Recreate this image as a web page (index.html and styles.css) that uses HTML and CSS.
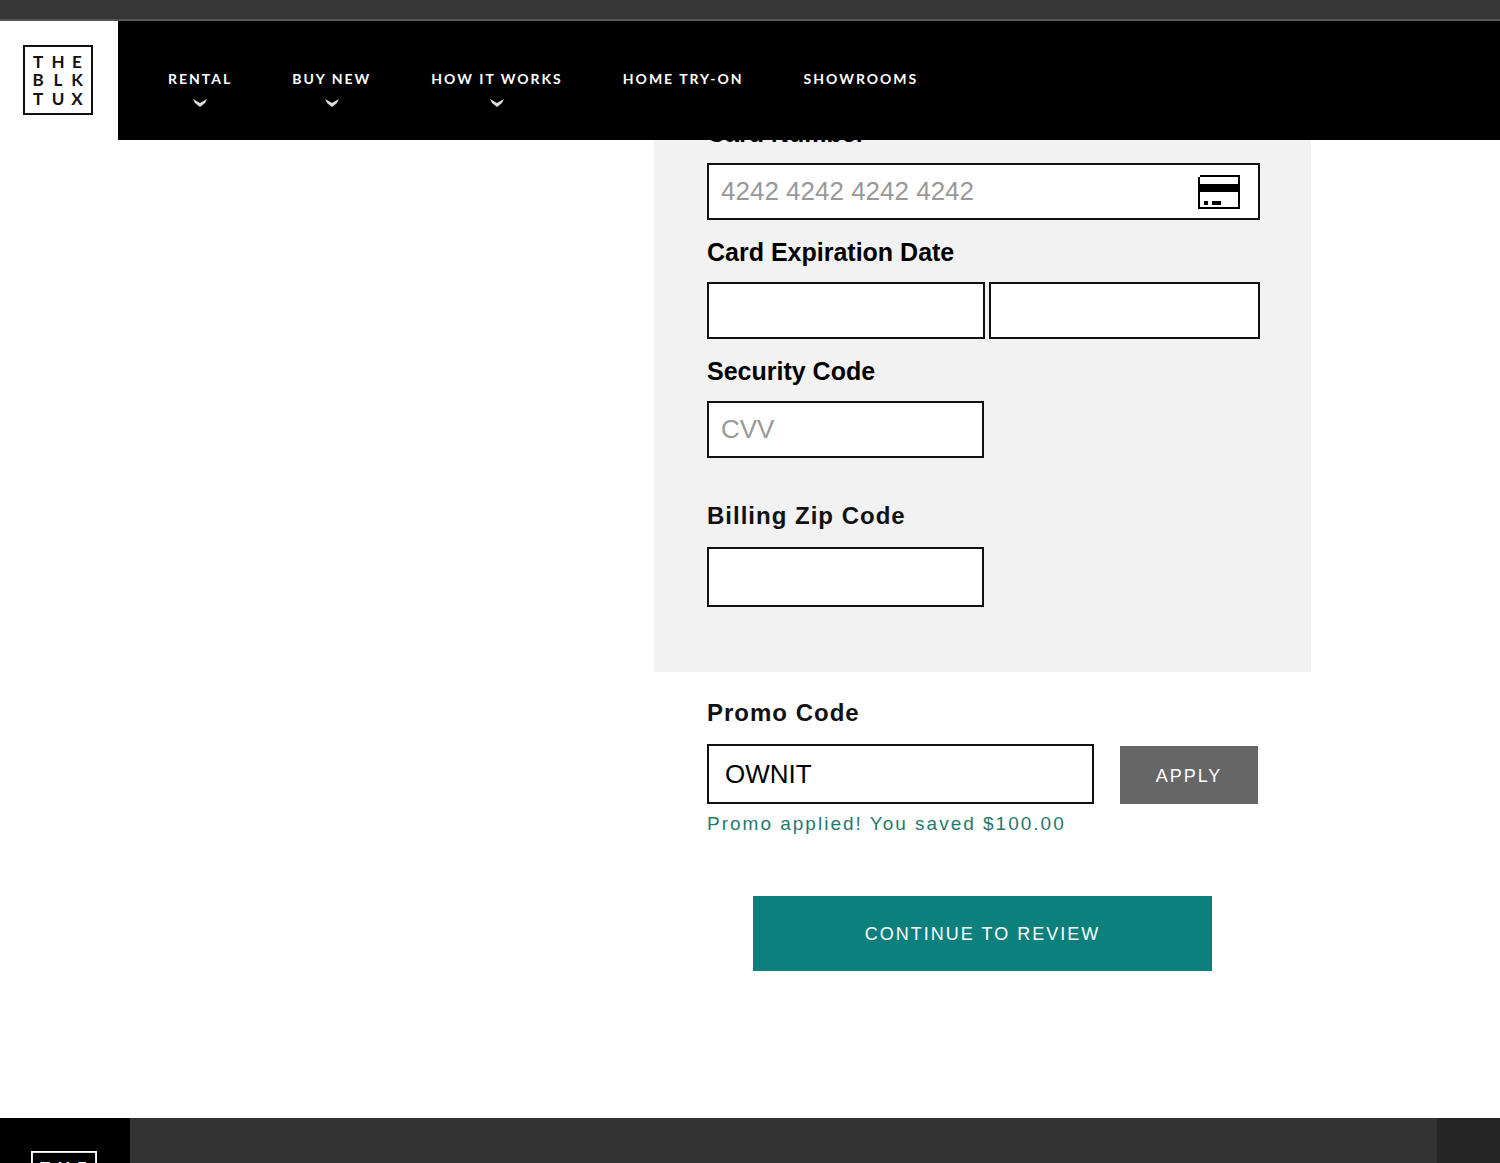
FILE: index.html
```html
<!DOCTYPE html>
<html lang="en">
<head>
<meta charset="utf-8">
<meta name="viewport" content="width=device-width, initial-scale=1">
<title>The Black Tux – Payment</title>
<link rel="stylesheet" href="styles.css">
</head>
<body>
<div class="topbar"></div>
<header class="header">
  <a class="brand" href="#" aria-label="The Black Tux">
    <svg class="logo" viewBox="0 0 70 70">
      <rect x="1" y="1" width="68" height="68" fill="none" stroke="currentColor" stroke-width="2"/>
      <g class="logo-text">
        <text x="15" y="23">T</text><text x="35" y="23">H</text><text x="54" y="23">E</text>
        <text x="15" y="41">B</text><text x="35" y="41">L</text><text x="54" y="41">K</text>
        <text x="15" y="60">T</text><text x="35" y="60">U</text><text x="54" y="60">X</text>
      </g>
    </svg>
  </a>
  <nav class="nav">
    <a href="#">RENTAL<svg class="chevron" viewBox="0 0 14 8"><path d="M0 0 L7 4 L14 0 L12 4 L7 8 L2 4 Z"/></svg></a>
    <a href="#">BUY NEW<svg class="chevron" viewBox="0 0 14 8"><path d="M0 0 L7 4 L14 0 L12 4 L7 8 L2 4 Z"/></svg></a>
    <a href="#">HOW IT WORKS<svg class="chevron" viewBox="0 0 14 8"><path d="M0 0 L7 4 L14 0 L12 4 L7 8 L2 4 Z"/></svg></a>
    <a href="#">HOME TRY-ON</a>
    <a href="#">SHOWROOMS</a>
  </nav>
</header>
<main class="main">
  <form class="checkout">
    <section class="panel">
      <label class="label" for="card">Card Number</label>
      <div class="field card-field">
        <input id="card" type="text" placeholder="4242 4242 4242 4242">
        <svg class="card-icon" viewBox="0 0 42 34">
          <path d="M2 1 H41 V33 H1 V2" fill="none" stroke="#000" stroke-width="2"/>
          <path d="M1 9 H41 V17 H1 Z M6 26 h4 v4 h-4 Z M14 26 h9 v4 h-9 Z"/>
        </svg>
      </div>
      <label class="label" for="month">Card Expiration Date</label>
      <div class="expiry">
        <input class="field" id="month" type="text" aria-label="Expiration month">
        <input class="field" id="year" type="text" aria-label="Expiration year">
      </div>
      <label class="label" for="cvv">Security Code</label>
      <input class="field half" id="cvv" type="text" placeholder="CVV">
      <label class="label spaced zip-label" for="zip">Billing Zip Code</label>
      <input class="field half tall" id="zip" type="text">
    </section>
    <section class="promo">
      <label class="label spaced" for="promo">Promo Code</label>
      <div class="promo-row">
        <input class="field tall" id="promo" type="text" value="OWNIT">
        <button class="button apply" type="button">APPLY</button>
      </div>
      <p class="message">Promo applied! You saved $100.00</p>
    </section>
    <button class="button continue" type="submit">CONTINUE TO REVIEW</button>
  </form>
</main>
<footer class="footer">
  <a class="footer-brand" href="#" aria-label="The Black Tux home">
    <svg class="logo" viewBox="0 0 70 70">
      <rect x="1" y="1" width="68" height="68" fill="none" stroke="currentColor" stroke-width="2"/>
      <g class="logo-text">
        <text x="15" y="23">T</text><text x="35" y="23">H</text><text x="54" y="23">E</text>
        <text x="15" y="41">B</text><text x="35" y="41">L</text><text x="54" y="41">K</text>
        <text x="15" y="60">T</text><text x="35" y="60">U</text><text x="54" y="60">X</text>
      </g>
    </svg>
  </a>
  <div class="footer-end"></div>
</footer>
</body>
</html>
```
FILE: styles.css
```css
* {
  box-sizing: border-box;
}

body {
  margin: 0;
  height: 100vh;
  overflow: hidden;
  background: #fff;
  color: #000;
  font-family: "Liberation Sans", Arial, sans-serif;
}

.topbar {
  height: 21px;
  background: #363636;
  border-bottom: 2px solid #555;
}

.header {
  position: sticky;
  top: 0;
  z-index: 2;
  display: flex;
  height: 119px;
  background: #000;
}

.brand {
  width: 118px;
  padding: 24px 23px;
  background: #fff;
  color: #111;
}

.logo {
  display: block;
  width: 70px;
  height: 70px;
}

.logo-text {
  fill: currentColor;
  font: bold 17px Lato, sans-serif;
  text-anchor: middle;
}

.nav {
  display: flex;
  gap: 60px;
  padding: 48px 0 0 50px;
}

.nav a {
  display: flex;
  flex-direction: column;
  align-items: center;
  gap: 10px;
  color: #fff;
  font: bold 14px/20px Lato, sans-serif;
  letter-spacing: 2px;
  text-decoration: none;
  white-space: nowrap;
}

.chevron {
  width: 14px;
  height: 8px;
  fill: #ddd;
}

.main {
  display: grid;
  grid-template-columns: 654fr 657fr 189fr;
  margin-top: -39px;
}

.checkout {
  grid-column: 2;
  padding-bottom: 147px;
}

.panel {
  padding: 0 51px 65px 53px;
  background: #f2f2f2;
}

.label {
  display: block;
  padding-top: 2px;
  font-size: 25px;
  font-weight: bold;
  line-height: 60px;
}

.spaced {
  padding-top: 0;
  color: #111;
  font-size: 24px;
  letter-spacing: 1px;
  line-height: 62px;
}

.zip-label {
  margin-top: 27px;
}

.field {
  display: block;
  width: 100%;
  height: 57px;
  padding: 0 12px;
  border: 2px solid #111;
  border-radius: 0;
  background: #fff;
  color: #000;
  font: 26px "Liberation Sans", Arial, sans-serif;
}

.field::placeholder,
.card-field input::placeholder {
  color: #999;
  opacity: 1;
}

.card-field {
  display: flex;
  align-items: center;
  padding-right: 18px;
}

.card-field input {
  flex: 1;
  min-width: 0;
  padding: 0;
  border: 0;
  background: none;
  font: inherit;
}

.card-icon {
  width: 42px;
  height: 34px;
}

.expiry {
  display: grid;
  grid-template-columns: 278fr 271fr;
  gap: 4px;
}

.half {
  width: 50%;
}

.tall {
  height: 60px;
}

.promo {
  padding: 10px 53px 0;
}

.promo-row {
  display: flex;
  align-items: flex-end;
  gap: 26px;
}

.promo-row .field {
  flex: 1;
  min-width: 0;
  padding: 0 16px;
}

.button {
  padding: 2px 0 0;
  border: 0;
  color: #fff;
  font: 18px "Liberation Sans", Arial, sans-serif;
  letter-spacing: 2px;
}

.apply {
  width: 138px;
  height: 58px;
  background: #666;
}

.message {
  margin: 0;
  color: #1f7a6c;
  font-size: 19px;
  line-height: 40px;
  letter-spacing: 2px;
}

.continue {
  display: block;
  width: 70%;
  height: 75px;
  margin: 52px auto 0;
  background: #0b807d;
}

.footer {
  display: flex;
  justify-content: space-between;
  background: #333;
}

.footer-brand {
  width: 130px;
  padding: 33px 31px;
  background: #000;
  color: #fff;
}

.footer-brand .logo {
  width: 66px;
  height: 66px;
}

.footer-end {
  width: 63px;
  background: #252525;
}
```
